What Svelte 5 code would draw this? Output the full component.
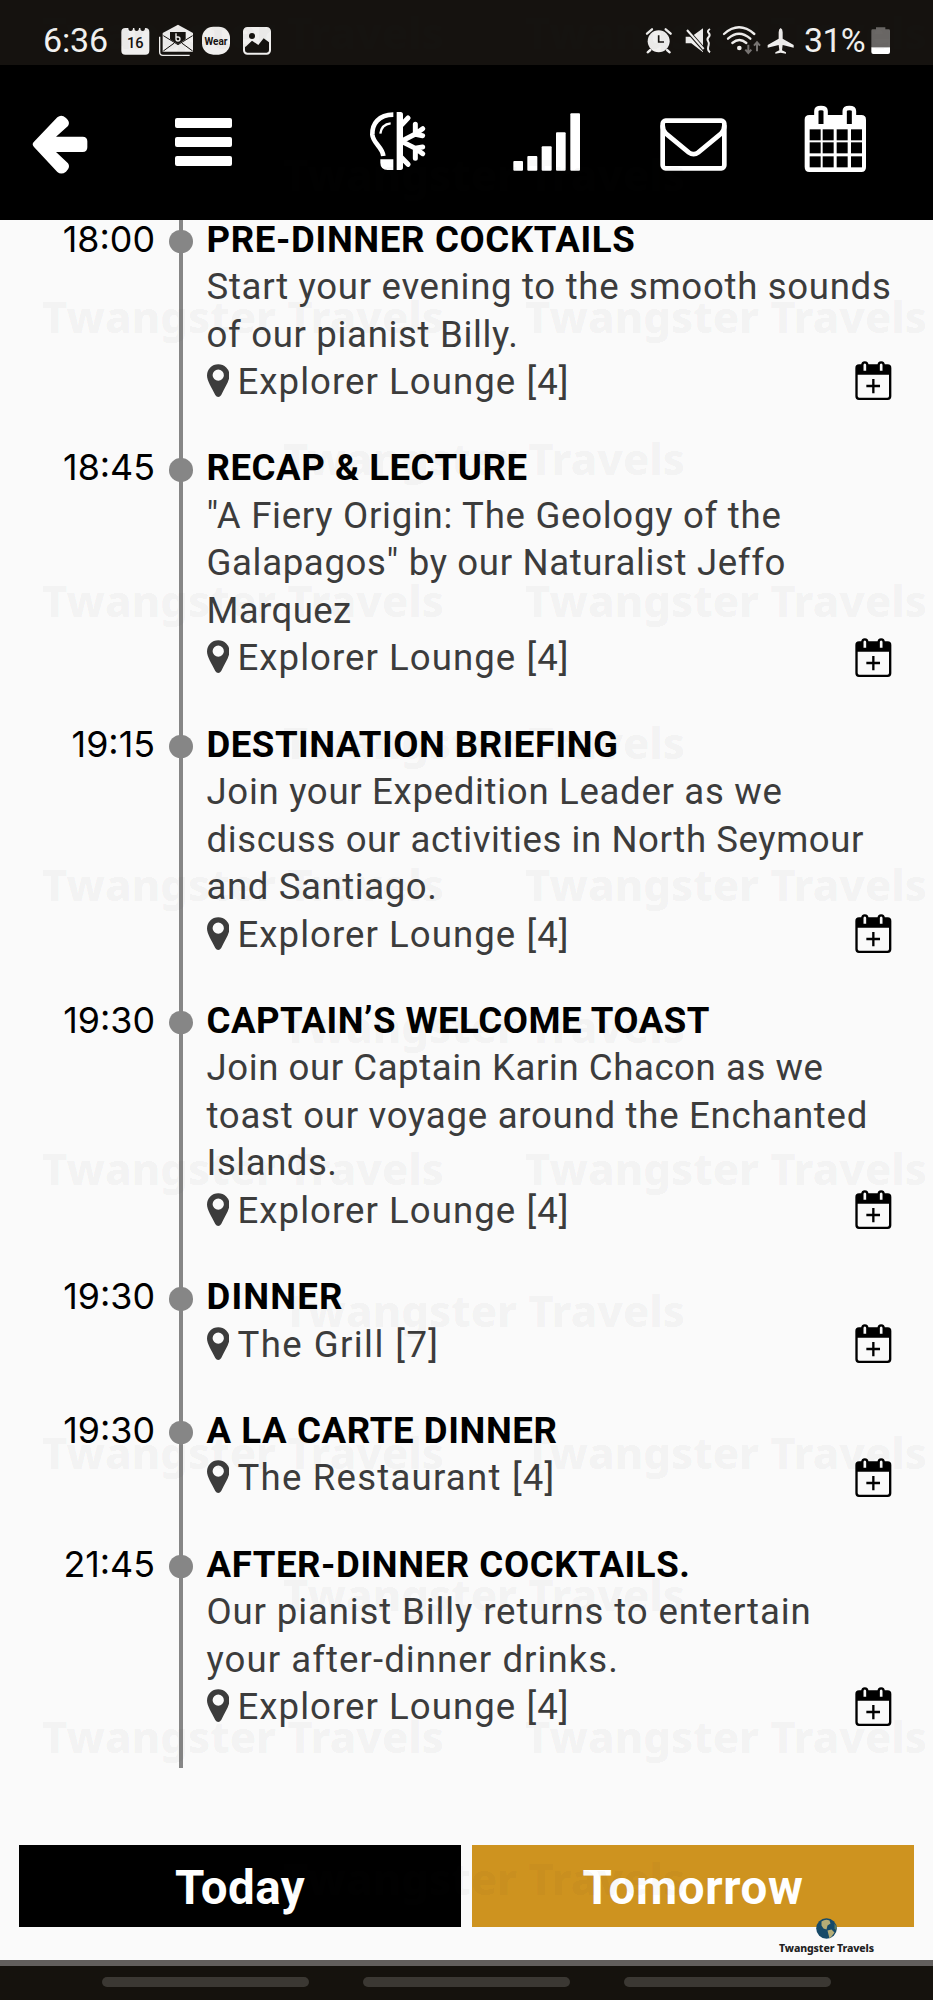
<script>
	const events = [
		{
			time: '18:00',
			title: ['PRE-DINNER COCKTAILS', 429],
			lines: [
				['Start your evening to the smooth sounds', 685],
				['of our pianist Billy.', 312]
			],
			place: ['Explorer Lounge [4]', 332]
		},
		{
			time: '18:45',
			title: ['RECAP & LECTURE', 321],
			lines: [
				['"A Fiery Origin: The Geology of the', 575],
				['Galapagos" by our Naturalist Jeffo', 579.5],
				['Marquez', 145]
			],
			place: ['Explorer Lounge [4]', 332]
		},
		{
			time: '19:15',
			title: ['DESTINATION BRIEFING', 412],
			lines: [
				['Join your Expedition Leader as we', 576],
				['discuss our activities in North Seymour', 657.5],
				['and Santiago.', 231]
			],
			place: ['Explorer Lounge [4]', 332]
		},
		{
			time: '19:30',
			title: ['CAPTAIN’S WELCOME TOAST', 503.5],
			lines: [
				['Join our Captain Karin Chacon as we', 617],
				['toast our voyage around the Enchanted', 661.5],
				['Islands.', 131]
			],
			place: ['Explorer Lounge [4]', 332]
		},
		{
			time: '19:30',
			title: ['DINNER', 137],
			lines: [],
			place: ['The Grill [7]', 202]
		},
		{
			time: '19:30',
			title: ['A LA CARTE DINNER', 351],
			lines: [],
			place: ['The Restaurant [4]', 318]
		},
		{
			time: '21:45',
			title: ['AFTER-DINNER COCKTAILS.', 484],
			lines: [
				['Our pianist Billy returns to entertain', 605],
				['your after-dinner drinks.', 412.5]
			],
			place: ['Explorer Lounge [4]', 332]
		}
	];

	const marks = [];
	for (let row = 0; row < 7; row++) {
		const y = 48.5 + row * 284;
		marks.push({ x: 42, y }, { x: 525, y }, { x: 283, y: y + 142 });
	}

	// track a line of text so that it takes up the given width
	function fit(node, width) {
		const natural = node.getBoundingClientRect().width;
		node.style.letterSpacing = `${(width - natural) / node.textContent.length}px`;
	}
</script>

<div class="screen">
	<div class="status">
		<span class="clock"><span use:fit={65}>6:36</span></span>
		<svg class="notices" viewBox="360 0 456 195" fill="#f0efee">
			<path d="M376 84h9q0 9 7 9t7-9h4q0 9 7 9t7-9h4q0 9 7 9t7-9h1q12 0 12 12v56q0 12-12 12h-60q-12 0-12-12v-56q0-12 12-12z" />
			<text x="406" y="143" class="date">16</text>
			<path d="M479 110v46q0 10 10 10h80" fill="none" stroke="#f0efee" stroke-width="4" />
			<path d="M488 99l46-25 45 25v56h-91z" />
			<path d="M510 96h47v22l-23 15-24-15z" fill="#15120f" />
			<path d="M490 107l44 27 44-27M490 153l33-24M578 153l-33-24" fill="none" stroke="#15120f" stroke-width="3" />
			<path d="M528 100v17q0 6 6 6t6-6-6-6h-5" fill="none" stroke="#f0efee" stroke-width="4" />
			<rect x="606" y="80" width="84" height="84" rx="34" />
			<text x="648" y="134" class="wear">Wear</text>
			<rect x="732" y="84" width="78" height="77" rx="10" fill="#15120f" stroke="#f0efee" stroke-width="6" />
			<path d="M735 87h72v40l-16-12-16 20-19-13-19 18-2 0z" />
			<circle cx="756" cy="108" r="9" fill="#15120f" />
		</svg>
		<svg class="signals" viewBox="1935 0 468 195" fill="#f0efee">
			<g transform="translate(1398 0)">
				<circle cx="578" cy="124" r="33" />
				<path d="M543 101l15-13M614 101l-15-13M553 150l-8 7M603 150l8 7" stroke="#f0efee" stroke-width="7" stroke-linecap="round" />
				<path d="M578 106v20h16" fill="none" stroke="#15120f" stroke-width="5" />
				<path d="M659 110h17l35-25v72l-35-27h-17z" />
				<path d="M661 88l54 62" stroke="#15120f" stroke-width="12" />
				<path d="M663 90l50 57" stroke="#f0efee" stroke-width="6" />
				<path d="M732 87q-10 6-4 12t0 12-2 12 2 12-2 12 6 10" fill="none" stroke="#f0efee" stroke-width="6" />
				<g fill="none" stroke="#f0efee" stroke-width="7" stroke-linecap="round">
					<path d="M774 102q45-40 91 0M786 116q33-29 67 0M799 129q21-18 42 0" />
				</g>
				<circle cx="820" cy="144" r="7" />
				<path d="M847 134v24M838 149l9 10 9-10M873 154v-26M864 137l9-10 9 10" fill="none" stroke="#777472" stroke-width="6" />
				<path d="M944 84q6 3 6 13v19l33 19v8l-33-8-2 16 12 6v4l-16-3-16 3v-4l12-6-2-16-33 8v-8l33-19V97q0-10 6-13z" />
			</g>
		</svg>
		<span class="percent"><span use:fit={61}>31%</span></span>
		<svg class="battery" viewBox="2613 0 60 195">
			<path d="M2614 92q0-4 4-4h10v-6h28v6h10q4 0 4 4v50h-56z" fill="#6b6866" />
			<path d="M2614 142h56v14q0 6-6 6h-44q-6 0-6-6z" fill="#fff" />
		</svg>
	</div>

	<header>
		<svg class="back" viewBox="96 195 168 465">
			<path d="M98 433q0-4 4-8l70-73q12-11 26 2 14 12 6 24l-36 32h80q14 0 14 14v18q0 14-14 14h-80l36 34q9 12-6 25-14 11-26 1l-70-75q-4-4-4-8z" />
		</svg>
		<svg class="menu" viewBox="525 195 171 465">
			<rect x="525" y="354" width="171" height="30" rx="6" />
			<rect x="525" y="411" width="171" height="30" rx="6" />
			<rect x="525" y="468" width="171" height="30" rx="6" />
		</svg>
		<svg class="climate" viewBox="1107 195 171 465">
			<g fill="none" stroke="#fff">
				<path d="M1180 344c-44 0-64 28-63 60 2 26 31 38 33 64" stroke-width="14" />
				<path d="M1172 370c-20 2-29 15-31 31" stroke-width="7" />
				<path
					d="M1204 424l42-22 22-16M1246 403v-30M1246 403l22 4M1204 424l42 21 22 16M1246 445v30M1246 445l22-4M1205 374l19-20M1205 473l19 20"
					stroke-width="15"
					stroke-linecap="round"
				/>
			</g>
			<path d="M1141 478h39v32h-17q-22-2-22-22zM1190 336h12q7 0 7 8v158q0 8-7 8h-12z" />
		</svg>
		<svg class="signal" viewBox="141 195 204 465">
			<rect x="142" y="483" width="29" height="29" rx="3" />
			<rect x="184" y="468" width="30" height="44" rx="3" />
			<rect x="227" y="439" width="30" height="73" rx="3" />
			<rect x="270" y="397" width="29" height="115" rx="3" />
			<rect x="313" y="340" width="29" height="172" rx="3" />
		</svg>
		<svg class="mail" viewBox="582 195 201 465">
			<g fill="none" stroke="#fff" stroke-width="14">
				<rect x="590" y="362" width="185" height="143" rx="9" />
				<path d="M590 376q0 16 10 25l68 56q15 11 29 0l68-56q10-9 10-25" />
			</g>
		</svg>
		<svg class="calendar" viewBox="1014 195 186 465">
			<path d="M1030 345h156q14 0 14 14v142q0 15-14 15h-156q-14 0-14-15V359q0-14 14-14z" />
			<path d="M1051 372v-39q0-9 14-9t14 9v39M1136 372v-39q0-9 14-9t14 9v39" fill="#000" stroke="#fff" stroke-width="13" />
			{#each [388, 427, 469] as y}
				{#each [1031, 1070, 1112, 1155] as x}
					<rect {x} {y} width="33" height="33" fill="#000" />
				{/each}
			{/each}
		</svg>
	</header>

	<main>
		<div class="timeline">
			{#each events as event}
				<section>
					<time>{event.time}</time>
					<i class="rail"><b></b></i>
					<div class="details">
						<h2><span use:fit={event.title[1]}>{event.title[0]}</span></h2>
						{#each event.lines as [text, width]}
							<p><span use:fit={width}>{text}</span></p>
						{/each}
						<div class="place">
							<svg class="pin" viewBox="0 0 68 100">
								<path d="M34 0a34 34 0 0 1 34 34c0 16-14 36-25 59-5 8-13 8-18 0C14 70 0 50 0 34A34 34 0 0 1 34 0zm0 16a17 17 0 1 0 0 34 17 17 0 0 0 0-34z" />
							</svg>
							<span use:fit={event.place[1]}>{event.place[0]}</span>
							<svg class="add" viewBox="0 0 110 120">
								<path d="M12 10h86q11 0 11 11v85q0 11-11 11H12q-11 0-11-11V21q0-11 11-11zM8 41v64q0 5 5 5h84q5 0 5-5V41z" fill-rule="evenodd" />
								<path d="M22 33V12q0-8 7.500-8t7.500 8v21zM71 33V12q0-8 7.500-8t7.500 8v21z" fill="#fafafa" stroke="#000" stroke-width="7" />
								<path d="M55 54v43M34 75h41" stroke="#000" stroke-width="7" />
							</svg>
						</div>
					</div>
				</section>
			{/each}
		</div>
		<div class="days">
			<button class="today"><span use:fit={130}>Today</span></button>
			<button class="tomorrow"><span use:fit={221}>Tomorrow</span></button>
		</div>
	</main>

	<nav>
		<i></i>
		<i></i>
		<i></i>
	</nav>

	<svg class="overlay" viewBox="0 0 933 2000">
		{#each marks as mark}
			<text x={mark.x} y={mark.y} textLength="402" lengthAdjust="spacingAndGlyphs">Twangster Travels</text>
		{/each}
		<g transform="translate(826.5 1928.5)">
			<circle r="10.3" fill="#174a68" />
			<path d="M-5-7q4-3 8-1l1 3-3 2-1 4-3-1-2-3zM1 2l4-1 3 3-3 4-2 2-1-4z" fill="#b6ad76" />
			<path d="M8-5l2 3v4l-2-2z" fill="#5a7b63" />
		</g>
		<text class="brand" x="779" y="1952" textLength="95">Twangster Travels</text>
	</svg>
</div>

<style>
	:global(body) {
		margin: 0;
		background: #fafafa;
	}

	.screen {
		position: relative;
		display: flex;
		flex-direction: column;
		width: 933px;
		height: 2000px;
		overflow: hidden;
		font-family: Roboto, "Liberation Sans", sans-serif;
		background: #fafafa;
	}

	svg {
		display: block;
		flex: none;
	}

	span {
		white-space: nowrap;
	}

	.status {
		display: flex;
		height: 65px;
		background: #15120f;
		color: #f3f2f1;
		font-size: 34px;
		line-height: 81px;
	}

	.clock {
		width: 65px;
		margin-left: 43px;
	}

	.notices {
		width: 152px;
		height: 65px;
		margin-left: 12px;
	}

	.date,
	.wear {
		fill: #15120f;
		text-anchor: middle;
		font-size: 44px;
		font-weight: 500;
	}

	.wear {
		font-size: 30px;
		font-weight: 700;
	}

	.signals {
		width: 156px;
		height: 65px;
		margin-left: 373px;
	}

	.percent {
		width: 61px;
		margin-left: 3px;
	}

	.battery {
		width: 20px;
		height: 65px;
		margin-left: 6px;
	}

	header {
		display: flex;
		height: 155px;
		background: #000;
	}

	header svg {
		height: 155px;
		fill: #fff;
	}

	.back {
		width: 56px;
		margin-left: 32px;
	}

	.menu {
		width: 57px;
		margin-left: 87px;
	}

	.climate {
		width: 57px;
		margin-left: 137px;
	}

	.signal {
		width: 68px;
		margin-left: 87px;
	}

	.mail {
		width: 67px;
		margin-left: 79px;
	}

	.calendar {
		width: 62px;
		margin-left: 77px;
	}

	main {
		display: flex;
		flex-direction: column;
		height: 1740px;
		overflow: hidden;
	}

	.timeline {
		height: 1553px;
		margin-top: -4.5px;
	}

	section {
		display: flex;
		font-size: 36.6px;
		line-height: 47.5px;
		color: #3c3c3c;
	}

	time {
		width: 155px;
		color: #000;
		font-family: Inter, Roboto, sans-serif;
		font-size: 35.8px;
		text-align: right;
	}

	.rail {
		display: flex;
		justify-content: center;
		width: 4px;
		margin: 0 23.5px 0 24px;
		background: #868686;
	}

	.rail b {
		flex: none;
		width: 23.5px;
		height: 23.5px;
		margin-top: 14px;
		border-radius: 50%;
		background: #868686;
	}

	.details {
		flex: 1;
		padding-bottom: 38.8px;
	}

	section:last-child .details {
		padding-bottom: 37.5px;
	}

	h2,
	p {
		margin: 0;
		font-size: inherit;
		font-weight: 400;
	}

	h2 {
		color: #000;
		font-weight: 700;
	}

	.place {
		display: flex;
		align-items: center;
		height: 47.5px;
	}

	.pin {
		width: 22.5px;
		height: 33.5px;
		margin: -2px 8.5px 0 0;
		fill: #3c3c3c;
	}

	.add {
		width: 36.7px;
		height: 40px;
		margin: -1px 41px 0 auto;
	}

	.days {
		display: flex;
		gap: 11px;
		height: 81.5px;
		margin: 76.8px 19px 0;
	}

	button {
		flex: 1;
		padding: 4px 0 0;
		border: 0;
		color: #fff;
		font: 700 47.5px Roboto, "Liberation Sans", sans-serif;
	}

	.today {
		background: #000;
	}

	.tomorrow {
		background: #ce931f;
	}

	nav {
		display: flex;
		justify-content: center;
		gap: 54.5px;
		height: 23px;
		padding-top: 11px;
		border-top: 6px solid #625f5d;
		background: #15120d;
	}

	nav i {
		width: 206.5px;
		height: 10px;
		border-radius: 5px;
		background: #3b3833;
	}

	.overlay {
		position: absolute;
		top: 0;
		left: 0;
		width: 933px;
		height: 2000px;
		pointer-events: none;
		font-family: "Noto Sans", "Open Sans", sans-serif;
		font-size: 42px;
		font-weight: 800;
		fill: rgba(50, 50, 50, 0.05);
	}

	.brand {
		font-size: 10.5px;
		fill: #222;
	}
</style>
